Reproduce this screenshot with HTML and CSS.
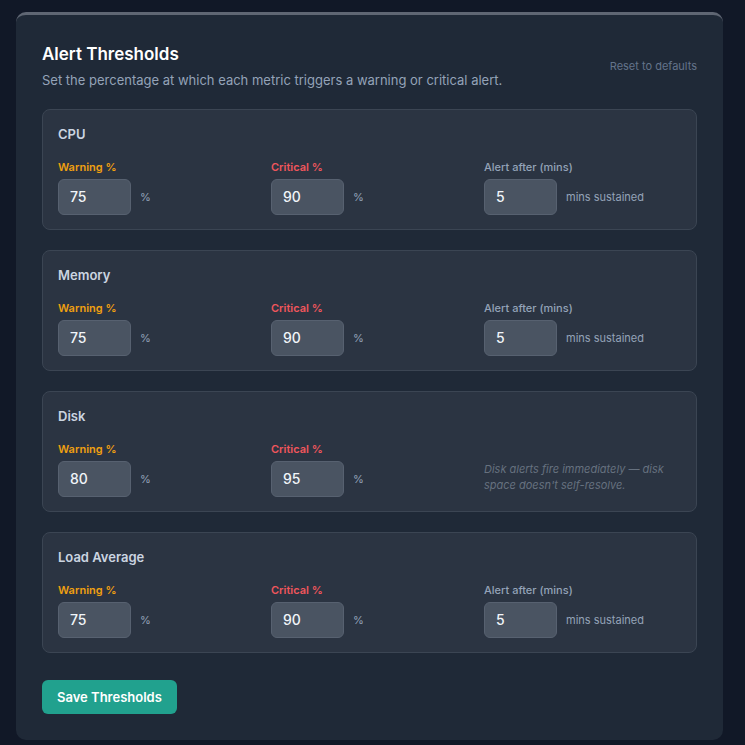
FILE: index.html
```html
<!DOCTYPE html>
<html lang="en">
<head>
<meta charset="utf-8">
<title>Alert Thresholds</title>
<link rel="stylesheet" href="styles.css">
</head>
<body>
<div class="card">
  <div class="header">
    <div class="header-text">
      <h1 class="title">Alert Thresholds</h1>
      <p class="subtitle">Set the percentage at which each metric triggers a warning or critical alert.</p>
    </div>
    <a class="reset">Reset to defaults</a>
  </div>

  <div class="metrics">
    <section class="metric">
      <h2 class="metric-name">CPU</h2>
      <div class="fields">
        <div class="field">
          <label class="label warn">Warning %</label>
          <div class="input-row"><div class="input">75</div><span class="unit">%</span></div>
        </div>
        <div class="field">
          <label class="label crit">Critical %</label>
          <div class="input-row"><div class="input">90</div><span class="unit">%</span></div>
        </div>
        <div class="field">
          <label class="label plain">Alert after (mins)</label>
          <div class="input-row"><div class="input">5</div><span class="unit">mins sustained</span></div>
        </div>
      </div>
    </section>

    <section class="metric">
      <h2 class="metric-name">Memory</h2>
      <div class="fields">
        <div class="field">
          <label class="label warn">Warning %</label>
          <div class="input-row"><div class="input">75</div><span class="unit">%</span></div>
        </div>
        <div class="field">
          <label class="label crit">Critical %</label>
          <div class="input-row"><div class="input">90</div><span class="unit">%</span></div>
        </div>
        <div class="field">
          <label class="label plain">Alert after (mins)</label>
          <div class="input-row"><div class="input">5</div><span class="unit">mins sustained</span></div>
        </div>
      </div>
    </section>

    <section class="metric">
      <h2 class="metric-name">Disk</h2>
      <div class="fields">
        <div class="field">
          <label class="label warn">Warning %</label>
          <div class="input-row"><div class="input">80</div><span class="unit">%</span></div>
        </div>
        <div class="field">
          <label class="label crit">Critical %</label>
          <div class="input-row"><div class="input">95</div><span class="unit">%</span></div>
        </div>
        <div class="field">
          <p class="note">Disk alerts fire immediately — disk space doesn't self-resolve.</p>
        </div>
      </div>
    </section>

    <section class="metric">
      <h2 class="metric-name">Load Average</h2>
      <div class="fields">
        <div class="field">
          <label class="label warn">Warning %</label>
          <div class="input-row"><div class="input">75</div><span class="unit">%</span></div>
        </div>
        <div class="field">
          <label class="label crit">Critical %</label>
          <div class="input-row"><div class="input">90</div><span class="unit">%</span></div>
        </div>
        <div class="field">
          <label class="label plain">Alert after (mins)</label>
          <div class="input-row"><div class="input">5</div><span class="unit">mins sustained</span></div>
        </div>
      </div>
    </section>
  </div>

  <button class="save">Save Thresholds</button>
</div>
</body>
</html>
```

FILE: styles.css
```css
* { box-sizing: border-box; }

html, body {
  margin: 0;
  padding: 0;
  background: #111827;
  font-family: Inter, "Noto Sans", "Liberation Sans", sans-serif;
}

body {
  padding: 12px 22px 0 16px;
  height: 745px;
  overflow: hidden;
}

.card {
  background: #1f2937;
  border-top: 3px solid #5f6673;
  border-radius: 10px;
  padding: 28px 26px 26px 26px;
}

.header {
  display: flex;
  align-items: center;
  justify-content: space-between;
  margin-bottom: 19px;
}

.title {
  margin: 0;
  font-size: 17px;
  line-height: 22px;
  font-weight: 600;
  color: #ffffff;
}

.subtitle {
  margin: 5px 0 0 0;
  font-size: 13px;
  line-height: 20px;
  color: #94a3b8;
}

.reset {
  font-size: 11px;
  color: #64748b;
  line-height: 16px;
  margin-top: -2px;
}

.metrics {
  display: flex;
  flex-direction: column;
  gap: 20px;
}

.metric {
  background: #2b3442;
  border: 1px solid #3b4553;
  border-radius: 8px;
  padding: 15px 15px 14px 15px;
  height: 121px;
}

.metric-name {
  margin: 0 0 15px 0;
  font-size: 13px;
  line-height: 19px;
  font-weight: 600;
  color: #cbd5e1;
}

.fields {
  display: grid;
  grid-template-columns: repeat(3, 1fr);
  column-gap: 16px;
}

.field {
  display: flex;
  flex-direction: column;
}

.label {
  display: block;
  font-size: 11px;
  line-height: 16px;
  font-weight: 600;
  margin-bottom: 4px;
}

.warn { color: #f0a010; }
.crit { color: #f0565c; }
.plain { color: #94a3b8; font-weight: 500; }

.input-row {
  display: flex;
  align-items: center;
  gap: 9px;
}

.input {
  width: 73px;
  height: 36px;
  background: #4a5462;
  border: 1px solid #576170;
  border-radius: 6px;
  padding: 0 11px;
  font-size: 14px;
  line-height: 34px;
  font-weight: 500;
  color: #f1f5f9;
}

.unit {
  font-size: 11px;
  color: #94a3b8;
}

.note {
  margin: 20px 0 0 0;
  font-size: 11px;
  line-height: 16px;
  font-style: italic;
  color: #66717f;
  max-width: 190px;
}

.save {
  margin-top: 27px;
  height: 34px;
  padding: 0 15px;
  border: none;
  border-radius: 6px;
  background: #21a18e;
  color: #ffffff;
  font-family: Inter, "Noto Sans", "Liberation Sans", sans-serif;
  font-size: 13px;
  font-weight: 600;
}
```
